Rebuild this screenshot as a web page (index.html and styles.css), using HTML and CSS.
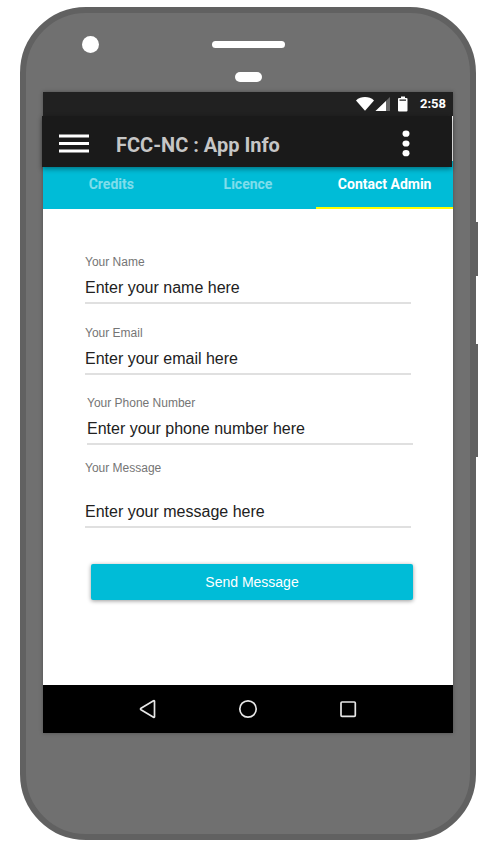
FILE: index.html
```html
<!DOCTYPE html>
<html lang="en">
<head>
<meta charset="utf-8">
<meta name="viewport" content="width=device-width, initial-scale=1">
<title>FCC-NC : App Info</title>
<link rel="stylesheet" href="styles.css">
</head>
<body>
<div class="phone">
  <span class="side-key side-key-power"></span>
  <span class="side-key side-key-volume"></span>
  <div class="phone-head">
    <span class="camera"></span>
    <span class="speaker"></span>
    <span class="sensor"></span>
  </div>
  <div class="screen">
    <div class="status-bar">
      <svg class="status-icons" width="52" height="16" viewBox="0 0 52 16" aria-hidden="true">
        <path d="M0 4.400C5 0 13 0 18 4.400L9 14.800z" fill="#fff"/>
        <path d="M34 1v14H19.500z" fill="#666"/>
        <path d="M30 5v10H19.500z" fill="#fff"/>
        <path d="M45 .5h4V2h1.500q1 0 1 1v11.500q0 1-1 1h-7.500q-1 0-1-1V3q0-1 1-1H45zM43.500 3.500v1.200h6.500V3.500z" fill="#fff" fill-rule="evenodd"/>
      </svg>
      <span class="clock">2:58</span>
    </div>
    <header class="app-bar">
      <button class="icon-button" type="button" aria-label="Menu">
        <svg width="30" height="19" viewBox="0 0 30 19"><path d="M0 .5h30v3H0zM0 8h30v3H0zM0 15.500h30v3H0z" fill="#fff"/></svg>
      </button>
      <h1 class="title">FCC-NC : App Info</h1>
      <button class="icon-button" type="button" aria-label="More options">
        <svg width="8" height="27" viewBox="0 0 8 27"><g fill="#fff"><ellipse cx="4" cy="3.700" rx="3.500" ry="3.100"/><ellipse cx="4" cy="13.500" rx="3.500" ry="3.100"/><ellipse cx="4" cy="23.200" rx="3.500" ry="3.100"/></g></svg>
      </button>
    </header>
    <nav class="tabs">
      <a class="tab" href="#credits">Credits</a>
      <a class="tab" href="#licence">Licence</a>
      <a class="tab tab-active" href="#contact" aria-current="page">Contact Admin</a>
    </nav>
    <form class="contact" id="contact">
      <div class="field">
        <label for="name">Your Name</label>
        <input id="name" type="text" placeholder="Enter your name here">
      </div>
      <div class="field">
        <label for="email">Your Email</label>
        <input id="email" type="email" placeholder="Enter your email here">
      </div>
      <div class="field field-phone">
        <label for="phone">Your Phone Number</label>
        <input id="phone" type="tel" placeholder="Enter your phone number here">
      </div>
      <div class="field field-message">
        <label for="message">Your Message</label>
        <textarea id="message" placeholder="Enter your message here"></textarea>
      </div>
      <button class="send" type="button">Send Message</button>
    </form>
    <nav class="system-nav" aria-label="System">
      <button class="icon-button" type="button" aria-label="Back">
        <svg width="20" height="20" viewBox="0 0 20 20"><path d="M16.500 2.300q0-1-1-.5L3 9.300q-1 .7 0 1.400l12.500 7.500q1 .5 1-.5z" class="nav-shape"/></svg>
      </button>
      <button class="icon-button" type="button" aria-label="Home">
        <svg width="20" height="20" viewBox="0 0 20 20"><circle cx="10" cy="10" r="8.200" class="nav-shape"/></svg>
      </button>
      <button class="icon-button" type="button" aria-label="Overview">
        <svg width="20" height="20" viewBox="0 0 20 20"><rect x="3" y="3" width="14.300" height="14.300" rx="1" class="nav-shape"/></svg>
      </button>
    </nav>
  </div>
</div>
</body>
</html>
```
FILE: styles.css
```css
* {
  box-sizing: border-box;
}

body {
  margin: 0;
  padding: 7px 20px 20px;
  background: #fff;
  font-family: "Liberation Sans", Arial, sans-serif;
}

button {
  border: 0;
  padding: 0;
  font: inherit;
}

.phone {
  position: relative;
  padding: 0 17px 101px;
  border: 6px solid #616161;
  border-radius: 66px;
  background: #707070;
}

/* Hardware keys on the right edge of the case */
.side-key {
  position: absolute;
  right: -8px;
  width: 2px;
  background: #616161;
}

.side-key-power {
  top: 209px;
  height: 54px;
}

.side-key-volume {
  top: 331px;
  height: 113px;
}

.phone-head {
  display: grid;
  grid-template-columns: 1fr auto 1fr;
  align-items: center;
  row-gap: 19px;
  padding: 23px 0 10px;
}

.camera {
  width: 17px;
  height: 17px;
  margin-left: 39px;
  border-radius: 50%;
  background: #fff;
}

.speaker {
  width: 73px;
  height: 7px;
  border-radius: 4px;
  background: #fff;
}

.sensor {
  grid-column: 2;
  justify-self: center;
  width: 27px;
  height: 10px;
  border-radius: 5px;
  background: #fff;
}

.screen {
  background: #fff;
  box-shadow: 0 0 4px rgba(0, 0, 0, 0.3);
}

.status-bar {
  display: flex;
  align-items: center;
  justify-content: flex-end;
  gap: 12px;
  height: 24px;
  padding-right: 7px;
  background: #212121;
  color: #fff;
  font: 700 13px/24px Roboto, sans-serif;
}

.app-bar {
  position: relative;
  display: flex;
  align-items: center;
  height: 51px;
  margin: 0 1px 0 -1px;
  padding: 3px 42px 0 17px;
  background: #1a1a1a;
  box-shadow: 0 2px 5px rgba(0, 0, 0, 0.4);
}

.icon-button {
  display: flex;
  background: none;
}

.title {
  flex: 1;
  margin: 0 0 0 27px;
  padding-top: 3px;
  color: #c6c6c6;
  font: 700 20px/24px Roboto, sans-serif;
}

.tabs {
  display: grid;
  grid-template-columns: repeat(3, 1fr);
  margin-top: -6px;
  background: #00bcd7;
}

.tab {
  height: 48px;
  border-bottom: 2px solid transparent;
  color: rgba(255, 255, 255, 0.5);
  font: 700 14px/46px Roboto, sans-serif;
  text-align: center;
  text-decoration: none;
}

.tab-active {
  border-color: #ff0;
  color: #fff;
}

.contact {
  display: flex;
  flex-direction: column;
  padding: 44px 42px 85px;
}

.field {
  display: flex;
  flex-direction: column;
  margin-bottom: 20px;
}

.field label {
  color: #757575;
  font-size: 12px;
  line-height: 18px;
}

.field input,
.field textarea {
  width: 100%;
  height: 33px;
  padding: 2px 0 0;
  border: 0;
  border-bottom: 2px solid #e0e0e0;
  border-radius: 0;
  outline: 0;
  background: none;
  color: #212121;
  font: inherit;
  font-size: 16px;
}

.field textarea {
  height: 51px;
  padding-top: 25px;
  line-height: 20px;
  resize: none;
}

.field ::placeholder {
  color: #212121;
  opacity: 1;
}

.field-phone {
  margin: -1px -2px 14px 2px;
}

.field-message {
  margin-bottom: 36px;
}

.send {
  height: 36px;
  margin: 0 -2px 0 6px;
  border-radius: 2px;
  background: #00bcd7;
  box-shadow: 0 1px 4px rgba(0, 0, 0, 0.4);
  color: #fff;
  font: 500 14px/34px "Liberation Sans", Arial, sans-serif;
}

.system-nav {
  display: flex;
  align-items: center;
  justify-content: center;
  gap: 80px;
  height: 48px;
  background: #000;
}

.nav-shape {
  fill: none;
  stroke: #e6e6e6;
  stroke-width: 1.700;
}
```
